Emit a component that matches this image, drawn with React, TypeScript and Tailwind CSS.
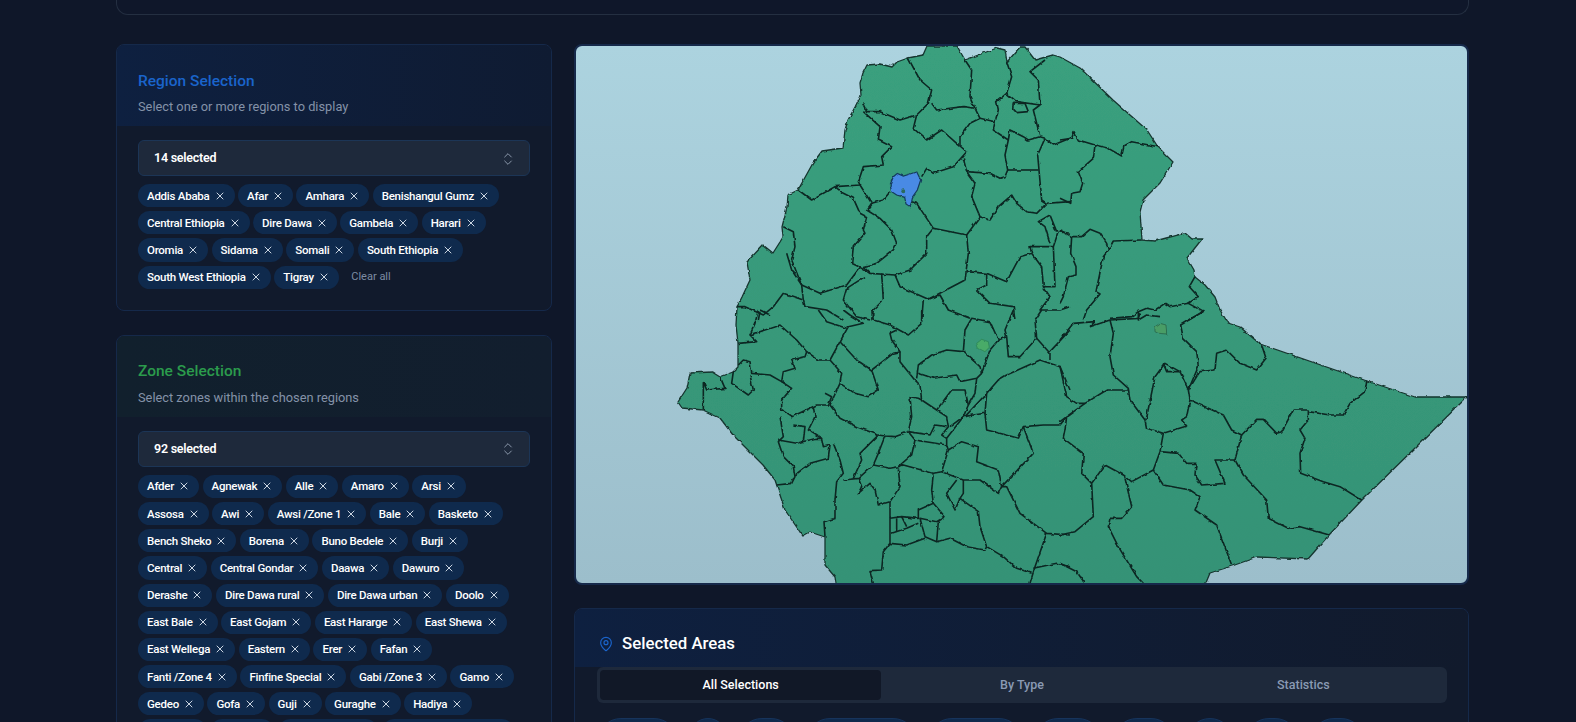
import React from "react";
import { X, ChevronsUpDown, MapPin } from "lucide-react";

const regionRows = [
  ["Addis Ababa", "Afar", "Amhara", "Benishangul Gumz"],
  ["Central Ethiopia", "Dire Dawa", "Gambela", "Harari"],
  ["Oromia", "Sidama", "Somali", "South Ethiopia"],
  ["South West Ethiopia", "Tigray"],
];
const zoneRows = [
  ["Afder", "Agnewak", "Alle", "Amaro", "Arsi"],
  ["Assosa", "Awi", "Awsi /Zone 1", "Bale", "Basketo"],
  ["Bench Sheko", "Borena", "Buno Bedele", "Burji"],
  ["Central", "Central Gondar", "Daawa", "Dawuro"],
  ["Derashe", "Dire Dawa rural", "Dire Dawa urban", "Doolo"],
  ["East Bale", "East Gojam", "East Hararge", "East Shewa"],
  ["East Wellega", "Eastern", "Erer", "Fafan"],
  ["Fanti /Zone 4", "Finfine Special", "Gabi /Zone 3", "Gamo"],
  ["Gedeo", "Gofa", "Guji", "Guraghe", "Hadiya"],
  ["Halaba", "Harari", "Hawassa City", "Horo Gudru Wellega"],
];
const outlined = ["Addis Ababa", "Afar", "Amhara", "Benishangul Gumz", "Central Ethiopia", "Dire Dawa", "Gambela", "Harari", "Oromia", "Sidama"];

const LAND =
  "927,46 923,55 908,58 897,62 892,67 880,64 867,65 863,73 860,83 861,95 855,107 848,120 845,130 843,148 822,151 813,163 798,190 788,195 787,207 782,227 783,237 780,242 773,253 763,245 747,262 750,280 742,297 737,307 736,325 738,343 738,367 733,372 720,377 712,372 690,373 687,388 678,402 682,408 703,410 720,418 733,435 750,452 763,465 775,480 785,510 800,532 803,536 810,532 825,537 825,565 835,577 837,590 1203,590 1210,573 1232,566 1257,557 1308,559 1329,535 1362,500 1467,397 1415,397 1367,381 1260,344 1240,327 1228,323 1220,310 1215,297 1205,285 1195,277 1194,270 1187,258 1202,239 1192,239 1185,233 1155,241 1142,240 1140,212 1143,200 1160,183 1173,162 1158,147 1147,130 1113,100 1080,68 1060,57 1053,55 1035,60 1025,47 1020,47 1007,62 1005,50 997,48 965,60 957,46";

const A = [
  "578,190 590,215 630,215 690,240 740,225 775,190 785,150 750,120 715,55",
  "785,190 800,210 880,200 915,205 930,235",
  "915,205 900,170 905,90 885,60",
  "930,235 975,245 985,210 980,185 1010,160 1025,110 1010,65",
  "1010,160 1040,185 1110,195 1105,120 1080,95 1125,60",
  "1030,190 1065,190 1075,215 1040,218 1028,205 1030,190",
  "1110,195 1090,210 1110,290 1125,295 1103,345 1115,480 1130,490 1200,485",
  "1125,295 1150,315 1200,295",
  "580,215 630,260 625,300 665,320 635,350 640,375 580,380 565,425 570,435 495,440 425,480 385,450",
  "740,225 730,265 770,300 815,270 860,310 870,318",
  "930,235 900,250 870,290 870,318 890,335 850,380 790,400 770,385 755,410",
  "975,245 970,270 1015,300 1020,270 1060,290 1075,300 1110,290",
  "1015,300 1005,345 1013,390 1005,410 990,415 960,400 890,395 880,355",
  "890,395 915,430 905,470 930,530 960,540 985,500 1025,465 1040,490 1070,515 1100,520 1130,490",
  "1013,390 1105,390",
  "570,435 605,490 640,480 660,455",
  "495,440 520,460 550,475 570,520 590,530 580,570 585,580 550,620 545,670 570,682",
  "605,490 590,510 630,535 665,570 680,610 670,630 620,670 580,680 600,700 675,705 720,690 770,640 770,590 790,565 740,490 725,485",
  "790,565 890,585 930,530",
  "890,585 895,640 885,720 775,778 690,740 675,705",
  "890,695 950,700 1010,725 1050,650 1085,640 1115,680 1120,740 1155,740 1150,620 1080,620 1085,640",
  "1150,620 1165,575 1200,580",
  "1140,610 1125,560 1105,545 1140,525 1160,575",
  "950,700 950,735 920,750 960,790 1030,800 1035,840",
  "775,778 810,765 835,810 900,835",
  "1120,740 1140,770 1110,810 1170,810 1200,800",
  "340,560 370,575 375,620 365,660 395,735 450,760 530,735 570,682 600,700",
  "350,640 365,690 395,735 400,780 340,760 310,800 280,825 225,800 200,800",
  "635,700 640,780 610,810 605,840",
  "585,710 530,745 520,780 560,830 600,840",
  "400,780 405,800 470,810 520,840",
  "760,780 755,840",
  "270,815 265,840",
];
const B = [
  "0,300 35,295 42,275 55,300 105,315 145,325 185,348 192,318 215,305 295,320",
  "105,315 100,355 55,395 68,430 60,455 35,460 32,490 0,475",
  "0,570 35,590 65,590 90,568 120,580 140,610 145,630 160,603 245,600",
  "35,590 32,640 48,680 48,705 25,710 10,770 0,790",
  "145,630 130,650 108,755 120,762 80,810 70,840",
  "150,835 215,830 235,815 260,805 285,810 315,790 330,800 385,790 430,815 385,840",
  "385,790 415,770 388,740 405,710",
  "235,815 235,840 260,825 300,830",
];
const C = [
  "205,100 260,95 240,75 330,45 380,90 410,125 405,140 365,150 375,175 340,185 335,215 300,195 245,190 240,155 220,150 205,165",
  "190,185 185,220 235,255 250,240 240,195",
  "150,200 165,235 110,240 100,215 100,300",
  "265,0 255,40 240,75",
  "270,0 300,15",
  "410,125 445,150 480,150 510,95 535,50 580,40 540,15 520,0",
  "445,0 470,35 500,45 530,55",
  "605,0 610,30 660,45 715,75 755,40 755,0",
  "510,95 560,150 605,180 670,130 690,125 665,90 660,70 680,60",
  "605,180 625,240 595,260 555,250 510,220 515,190 480,150",
  "690,125 690,155 730,205 750,225 755,270 800,300 830,320 835,350 815,375 830,385",
  "740,205 745,165 785,135 830,120 880,125 930,170 935,190 960,120 985,90 1010,80",
  "880,125 885,60 905,25 960,35 985,90",
  "745,190 790,205 860,195 870,215 920,205 935,190",
  "510,220 480,285 510,325 560,350 625,375 645,378 675,380 715,365 725,320 720,260 745,265 755,270",
  "465,250 485,260 475,285 440,285 365,320 335,300 335,270 365,235 335,215",
  "370,345 405,350 400,395",
  "330,320 340,380 325,395 340,440 370,470 375,500 365,520 320,525",
  "430,290 435,320 415,360 455,385 460,410 480,405",
  "325,390 380,400 440,385 455,385",
  "480,405 475,445 420,460 375,495",
  "490,400 510,450 520,490 500,515 495,570 495,625 462,635 465,680",
  "625,375 600,400 570,430 575,450 550,505",
  "520,510 565,505 610,465 625,430 645,378",
  "610,465 660,475 685,470 725,435 735,390 715,365",
  "735,390 830,405 835,420 815,485 790,490 700,465 685,470",
  "565,505 575,530 565,550 600,520 615,540 625,585 660,575 690,530 685,475",
  "660,575 660,625 660,700 640,725 635,780 600,782 610,820",
  "660,625 695,620 745,625 745,600 790,580 825,620 800,635 750,625 765,680 800,695 805,635",
  "665,670 710,655 745,640",
  "695,620 710,650",
  "680,625 680,665",
  "660,700 710,705 765,685",
  "800,695 840,685 890,710 945,720 950,710 1000,740 1040,775 1085,790",
  "790,490 785,540 790,580",
  "815,485 880,510 930,510 985,550 995,530",
  "880,510 880,550 870,565 925,605 930,650 950,710",
  "870,565 855,600 830,550 860,510",
  "995,530 985,480 920,455 925,410 875,395 835,420",
  "830,410 830,385 880,320 945,310 950,360 1010,375 1045,385 1060,350 1120,345 1170,345 1190,320",
  "995,530 1090,430 1060,350",
  "995,530 1010,530 1050,610 1130,670 1200,675",
  "1130,670 1095,770 1080,820",
  "1090,775 1160,760 1200,770",
  "885,320 950,250 985,210 1010,195 1110,150 1170,170 1200,240",
  "950,250 945,310",
  "800,300 845,240 885,240 895,285 880,320 840,350",
  "715,365 780,375 795,345 830,350",
  "920,205 915,250 895,285",
  "1010,80 1015,140 1050,140 1100,85 1140,130 1140,150",
  "1010,80 1005,60 1030,0",
  "1100,85 1095,30 1115,0",
  "1140,125 1200,60",
];
const D = [
  "0,90 40,40 105,35 90,50 150,30 235,25 240,10",
  "150,30 160,70 150,140 160,195 205,235 210,270 255,330 260,355 310,370 300,425 280,480 215,515 190,495 135,465 95,520 100,620 45,665 0,675",
  "0,170 20,260 50,280 75,280 140,240 205,240",
  "75,280 20,320 15,360 10,385 70,430 65,490 95,520",
  "0,335 20,320",
  "195,505 215,590 185,625 150,625 145,650 175,710 230,800 250,820",
  "280,480 310,525 390,540 420,560 405,600 470,645 515,765",
  "300,425 355,430 380,460 408,460 405,495 425,525 495,520 465,450 525,450 545,375",
  "525,450 550,495 620,570 625,625 685,655 720,650 808,675",
  "258,330 285,200 315,160 360,185 385,240 390,270 380,320 365,330 380,348 315,368",
  "310,160 320,185 360,185",
  "385,240 410,200 420,185 465,180 470,130 500,120 540,160 590,180 618,145 605,105",
  "385,240 415,170 410,125 370,85 362,45 420,10 430,0",
  "390,270 490,315 515,360 545,375 590,328 610,328 650,370 665,365 700,300 745,300 745,330 720,360 735,385 720,430 722,490 790,515 840,530 905,570",
  "745,305 810,315 850,315 870,280 915,245 920,212",
  "0,760 50,785 75,820",
];

function Group({ x, y, lines }: { x: number; y: number; lines: string[] }) {
  return (
    <g transform={`translate(${x} ${y}) scale(0.33333)`}>
      {lines.map((p, i) => (
        <polyline key={i} points={p} fill="none" stroke="#0b2723" strokeWidth={1.6} strokeLinejoin="round" vectorEffect="non-scaling-stroke" />
      ))}
    </g>
  );
}

function EthiopiaMap() {
  return (
    <svg viewBox="576 46 891 537" className="block h-full w-full">
      <defs>
        <linearGradient id="landFill" x1="0" y1="0" x2="0" y2="1">
          <stop offset="0" stopColor="#3aa07e" />
          <stop offset="1" stopColor="#359276" />
        </linearGradient>
        <filter id="wobble" filterUnits="userSpaceOnUse" x="570" y="40" width="910" height="560">
          <feTurbulence type="fractalNoise" baseFrequency="0.16" numOctaves="2" seed="4" result="n" />
          <feDisplacementMap in="SourceGraphic" in2="n" scale="3" xChannelSelector="R" yChannelSelector="G" />
          <feGaussianBlur stdDeviation="0.3" />
        </filter>
      </defs>
      <g filter="url(#wobble)">
        <polygon points={LAND} fill="url(#landFill)" stroke="#16352f" strokeWidth={1.3} strokeLinejoin="round" />
        <Group x={670} y={40} lines={A} />
        <Group x={1060} y={40} lines={B} />
        <Group x={670} y={310} lines={C} />
        <Group x={1060} y={310} lines={D} />
        <g transform="translate(670 40) scale(0.33333)">
          <polygon points="660,435 670,410 682,400 700,408 720,402 740,395 752,420 742,450 728,470 725,485 720,500 708,492 704,472 680,465 665,455" fill="#4a8ae4" stroke="#123a5c" strokeWidth={1.2} vectorEffect="non-scaling-stroke" />
          <circle cx="700" cy="454" r="6" fill="#2a6a5c" />
        </g>
        <g transform="translate(670 310) scale(0.33333)">
          <polygon points="920,100 935,88 955,95 958,112 945,125 925,115" fill="#48ab68" stroke="#2f8a5c" strokeWidth={1} vectorEffect="non-scaling-stroke" />
        </g>
        <g transform="translate(1060 310) scale(0.33333)">
          <polygon points="285,50 300,40 318,45 320,72 295,70 285,65" fill="#4a9d66" stroke="#2c6f50" strokeWidth={1} vectorEffect="non-scaling-stroke" />
        </g>
      </g>
    </svg>
  );
}

function Chip({ label }: { label: string }) {
  return (
    <span className="inline-flex h-[23.2px] items-center gap-[4px] whitespace-nowrap rounded-full border border-transparent bg-[#0f2a4d] px-2 text-[11.5px] font-medium leading-4 tracking-[-0.25px] text-white">
      {label}
      <X className="h-3 w-3 text-[#cbd5e1]" strokeWidth={2} />
    </span>
  );
}

function ChipRows({ rows, tail }: { rows: string[][]; tail?: boolean }) {
  return (
    <div className="mt-2 flex flex-col gap-1">
      {rows.map((row, i) => (
        <div key={i} className="flex items-center gap-[3.5px]">
          {row.map((c) => (
            <Chip key={c} label={c} />
          ))}
          {tail && i === rows.length - 1 && <span className="ml-[9px] pt-px text-[11px] text-[#7d8ca3]">Clear all</span>}
        </div>
      ))}
    </div>
  );
}

function SelectBox({ label }: { label: string }) {
  return (
    <div className="flex h-9 items-center justify-between rounded-md border border-[#1c3556] bg-[#1e293b] pl-[15px] pr-[13px] pt-px text-[12.5px] font-semibold tracking-[-0.25px] text-white">
      {label}
      <ChevronsUpDown className="h-4 w-4 text-[#8b98ab]" strokeWidth={1.5} />
    </div>
  );
}

export default function App() {
  return (
    <div className="h-[722px] overflow-hidden bg-[#0f1729] font-['Roboto','Noto_Sans',sans-serif]">
      <div className="ml-[116px] w-[1353px]">
        <div className="h-[15px] rounded-b-xl border border-t-0 border-[#242f41] bg-[#0f172a]" />
        <div className="mt-[29px] grid grid-cols-[436px_895px] items-start gap-[22px]">
          <div className="flex flex-col gap-6">
            <section className="overflow-hidden rounded-lg border border-[#15294a] bg-[#111a2c]">
              <div className="h-[81px] bg-gradient-to-r from-[#0e2040] to-[#0f1b32] px-[21px] pt-[24px]">
                <h2 className="text-[15.5px] font-medium leading-6 text-[#1a64cb]">Region Selection</h2>
                <p className="mt-[4px] text-[12.8px] leading-5 text-[#8492a8]">Select one or more regions to display</p>
              </div>
              <div className="px-[21px] pb-[21px] pt-[14px]">
                <SelectBox label="14 selected" />
                <ChipRows rows={regionRows} tail />
              </div>
            </section>
            <section className="overflow-hidden rounded-lg border border-[#15294a] bg-[#111a2c]">
              <div className="h-[81px] bg-gradient-to-r from-[#11202d] to-[#121e2e] px-[21px] pt-[23px]">
                <h2 className="text-[15.5px] font-medium leading-6 text-[#2b9b4c]">Zone Selection</h2>
                <p className="mt-[5px] text-[12.8px] leading-5 text-[#8492a8]">Select zones within the chosen regions</p>
              </div>
              <div className="px-[21px] pb-[21px] pt-[14px]">
                <SelectBox label="92 selected" />
                <ChipRows rows={zoneRows} />
              </div>
            </section>
          </div>
          <div className="flex flex-col gap-[23px]">
            <div className="h-[541px] overflow-hidden rounded-lg border-2 border-[#16294a] bg-gradient-to-b from-[#acd3df] to-[#9cbecb]">
              <EthiopiaMap />
            </div>
            <section className="overflow-hidden rounded-lg border border-[#15294a] bg-[#111a2c]">
              <div className="flex h-[58px] items-start gap-2 bg-gradient-to-r from-[#0e2040] to-[#111a2c] pl-[23px] pt-[22px]">
                <MapPin className="mt-[5px] h-4 w-4 text-[#1a64cb]" strokeWidth={1.75} />
                <h2 className="text-[16.8px] font-medium leading-6 text-white">Selected Areas</h2>
              </div>
              <div className="pl-[22px] pr-[21px]">
                <div className="grid h-9 grid-cols-3 gap-0 rounded-md bg-[#1e293b] p-[3px] text-[12.5px] font-medium text-[#8a9ab3]">
                  <div className="flex items-center justify-center rounded bg-[#111827] text-white">All Selections</div>
                  <div className="flex items-center justify-center">By Type</div>
                  <div className="flex items-center justify-center">Statistics</div>
                </div>
                <div className="mt-[15px] flex gap-[11px]">
                  {outlined.map((c) => (
                    <span key={c} className="flex h-12 items-center whitespace-nowrap rounded-full border border-[#17345c] bg-[#0f2a4d] px-2 text-[11.5px] font-medium tracking-[-0.25px] text-white">
                      {c}
                    </span>
                  ))}
                </div>
              </div>
            </section>
          </div>
        </div>
      </div>
    </div>
  );
}
